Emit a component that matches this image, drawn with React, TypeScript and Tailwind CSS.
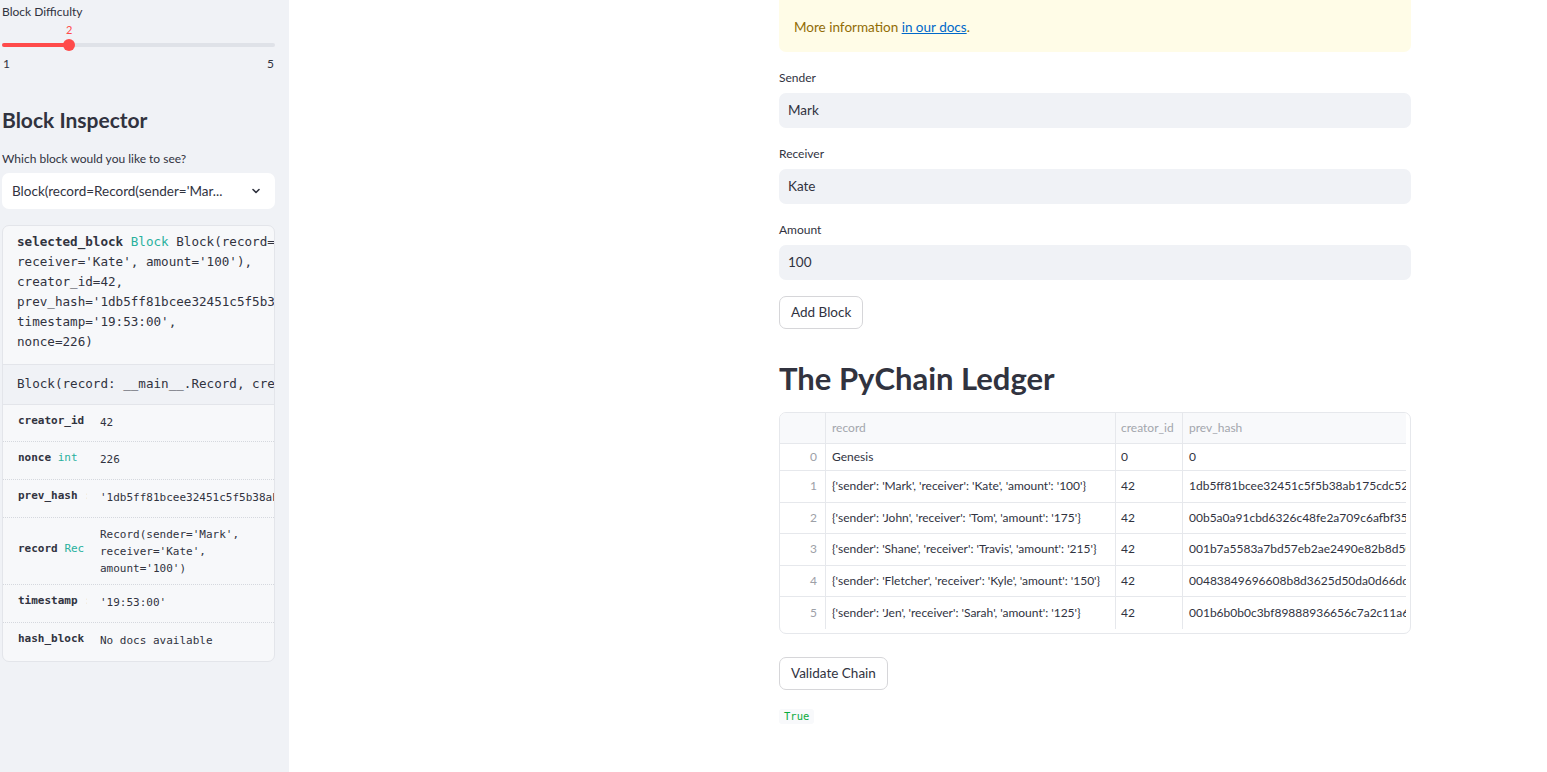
import React from "react";

const sans = { fontFamily: '"Lato", "Noto Sans", sans-serif' };
const mono = { fontFamily: '"DejaVu Sans Mono", "Liberation Mono", monospace' };

const rows = [
  ["0", "Genesis", "0", "0"],
  ["1", "{'sender': 'Mark', 'receiver': 'Kate', 'amount': '100'}", "42", "1db5ff81bcee32451c5f5b38ab175cdc52536e"],
  ["2", "{'sender': 'John', 'receiver': 'Tom', 'amount': '175'}", "42", "00b5a0a91cbd6326c48fe2a709c6afbf35d2a1"],
  ["3", "{'sender': 'Shane', 'receiver': 'Travis', 'amount': '215'}", "42", "001b7a5583a7bd57eb2ae2490e82b8d501c3"],
  ["4", "{'sender': 'Fletcher', 'receiver': 'Kyle', 'amount': '150'}", "42", "00483849696608b8d3625d50da0d66dd28f1"],
  ["5", "{'sender': 'Jen', 'receiver': 'Sarah', 'amount': '125'}", "42", "001b6b0b0c3bf89888936656c7a2c11a6ab4"],
];

function Field({ label, value }: { label: string; value: string }) {
  return (
    <div className="flex flex-col">
      <div className="text-[12px] leading-[16px] text-[#31333f] mt-[18px]">{label}</div>
      <div className="mt-[7px] h-[35px] rounded-[7px] bg-[#f0f2f6] flex items-center pl-[9px] text-[13.5px] text-[#31333f]">
        {value}
      </div>
    </div>
  );
}

function HelpRow({ name, type, typeColor, value, h, last }: { name: string; type?: string; typeColor?: string; value: React.ReactNode; h: string; last?: boolean }) {
  return (
    <div className={`flex ${last ? "" : "border-b border-dotted border-[#d5d8de]"} ${h}`}>
      <div className="w-[84px] shrink-0 pl-[15px] flex items-center overflow-hidden whitespace-nowrap">
        <span className="font-bold text-[11px] text-[#31333f] -mt-[4px]" style={mono}>
          {name}
          {type && <span className={`font-normal ${typeColor}`}> {type}</span>}
        </span>
      </div>
      <div className="flex-1 flex items-center overflow-hidden whitespace-nowrap pl-[13px] text-[11px] text-[#31333f]" style={mono}>
        {value}
      </div>
    </div>
  );
}

export default function App() {
  return (
    <div className="flex w-[1547px] h-[772px] overflow-hidden bg-white text-[#31333f]" style={sans}>
      {/* Sidebar */}
      <div className="w-[289px] shrink-0 bg-[#f0f2f6] h-full">
        <div className="w-[273px] ml-[2px]">
          <div className="pt-[4px] text-[12px] leading-[16px]">Block Difficulty</div>
          <div className="relative h-[36px]">
            <div className="absolute left-[64px] top-[3px] text-[11px] leading-[14px] text-[#ff4b4b]">2</div>
            <div className="absolute left-0 right-0 top-[23px] h-[4px] rounded-full bg-[#dfe2e8]" />
            <div className="absolute left-0 w-[67px] top-[23px] h-[4px] rounded-full bg-[#ff4b4b]" />
            <div className="absolute left-[61px] top-[19px] w-[12px] h-[12px] rounded-full bg-[#ff4b4b]" />
          </div>
          <div className="flex justify-between text-[12px] leading-[16px] px-[1px]">
            <span>1</span>
            <span>5</span>
          </div>
          <div className="mt-[35px] text-[21px] leading-[26px] font-bold">Block Inspector</div>
          <div className="mt-[18px] text-[12px] leading-[16px]">Which block would you like to see?</div>
          <div className="mt-[6px] h-[36px] rounded-[7px] bg-white flex items-center justify-between pl-[10px] pr-[13px]">
            <span className="text-[13.5px] whitespace-nowrap">Block(record=Record(sender='Mar...</span>
            <svg width="12" height="12" viewBox="0 0 24 24" fill="none" stroke="#31333f" strokeWidth="3.2" strokeLinecap="round" strokeLinejoin="round">
              <path d="M6 9l6 6 6-6" />
            </svg>
          </div>

          {/* help panel */}
          <div className="mt-[16px] h-[437px] rounded-[7px] border border-[#e3e5ea] bg-[#f7f8fa] overflow-hidden">
            <div className="pt-[6px] pb-[12px] pl-[14px] text-[12.6px] leading-[20px] whitespace-nowrap overflow-hidden" style={mono}>
              <div>
                <span className="font-bold">selected_block</span>{" "}
                <span className="text-[#29b09d]">Block</span> Block(record=Record(sender='Mark',
              </div>
              <div>receiver='Kate', amount='100'),</div>
              <div>creator_id=42,</div>
              <div>prev_hash='1db5ff81bcee32451c5f5b38ab175cdc',</div>
              <div>timestamp='19:53:00',</div>
              <div>nonce=226)</div>
            </div>
            <div className="h-[41px] border-y border-[#e3e5ea] bg-[#f0f2f6] flex items-center pl-[14px] text-[12.6px] whitespace-nowrap overflow-hidden" style={mono}>
              Block(record: __main__.Record, creator_id: int)
            </div>
            <HelpRow h="h-[37px]" name="creator_id" value="42" />
            <HelpRow h="h-[38px]" name="nonce" type="int" typeColor="text-[#29b09d]" value="226" />
            <HelpRow h="h-[38px]" name="prev_hash" type=":" typeColor="text-[#c3c6cc]" value="'1db5ff81bcee32451c5f5b38ab175cdc'" />
            <HelpRow
              h="h-[67px]"
              name="record"
              type="Rec"
              typeColor="text-[#29b09d]"
              value={
                <div className="leading-[17px]">
                  <div>Record(sender='Mark',</div>
                  <div>receiver='Kate',</div>
                  <div>amount='100')</div>
                </div>
              }
            />
            <HelpRow h="h-[38px]" name="timestamp" type=":" typeColor="text-[#c3c6cc]" value="'19:53:00'" />
            <HelpRow h="h-[37px]" name="hash_block" value="No docs available" last />
          </div>
        </div>
      </div>

      {/* Main */}
      <div className="flex-1 pl-[490px]">
        <div className="w-[632px] flex flex-col">
          <div className="h-[52px] rounded-b-[7px] bg-[#fffce7] pl-[15px] pt-[18px] text-[13.5px] leading-[18px] text-[#926c05]">
            More information <span className="text-[#0068c9] underline">in our docs</span>.
          </div>
          <Field label="Sender" value="Mark" />
          <Field label="Receiver" value="Kate" />
          <Field label="Amount" value="100" />
          <div className="mt-[16px]">
            <button className="h-[33px] px-[11px] rounded-[7px] border border-[#d6d6d9] bg-white text-[13.5px] text-[#31333f]">
              Add Block
            </button>
          </div>
          <div className="mt-[29px] text-[31px] leading-[40px] font-bold">The PyChain Ledger</div>
          <div className="mt-[14px] h-[222px] rounded-[7px] border border-[#e6e8ec] overflow-hidden">
            <div className="w-[626px] overflow-hidden">
              <div className="flex h-[31px] bg-[#f8f9fb] border-b border-[#e6e8ec] text-[12px] text-[#a3a6ad]">
                <div className="w-[46px] shrink-0 border-r border-[#e6e8ec]" />
                <div className="w-[290px] shrink-0 border-r border-[#e6e8ec] flex items-center pl-[6px]">record</div>
                <div className="w-[67px] shrink-0 border-r border-[#e6e8ec] flex items-center pl-[5px]">creator_id</div>
                <div className="flex-1 flex items-center pl-[6px]">prev_hash</div>
              </div>
              {rows.map((r, i) => (
                <div
                  key={r[0]}
                  className={`flex ${i === 0 ? "h-[27px]" : "h-[31.5px]"} ${i < 5 ? "border-b border-[#e6e8ec]" : ""} text-[12px] text-[#31333f]`}
                >
                  <div className="w-[46px] shrink-0 border-r border-[#e6e8ec] flex items-center justify-end pr-[8px] text-[#9da0a7]">
                    {r[0]}
                  </div>
                  <div className="w-[290px] shrink-0 border-r border-[#e6e8ec] flex items-center pl-[6px] whitespace-nowrap overflow-hidden">
                    {r[1]}
                  </div>
                  <div className="w-[67px] shrink-0 border-r border-[#e6e8ec] flex items-center pl-[5px]">{r[2]}</div>
                  <div className="flex-1 flex items-center pl-[6px] whitespace-nowrap overflow-hidden">{r[3]}</div>
                </div>
              ))}
            </div>
          </div>
          <div className="mt-[23px]">
            <button className="h-[33px] px-[11px] rounded-[7px] border border-[#d6d6d9] bg-white text-[13.5px] text-[#31333f]">
              Validate Chain
            </button>
          </div>
          <div className="mt-[19px]">
            <span className="inline-block h-[15px] px-[5px] rounded-[3px] bg-[#f8f9fb] text-[10.5px] leading-[15px] text-[#09ab3b] align-top" style={mono}>
              True
            </span>
          </div>
        </div>
      </div>
    </div>
  );
}
